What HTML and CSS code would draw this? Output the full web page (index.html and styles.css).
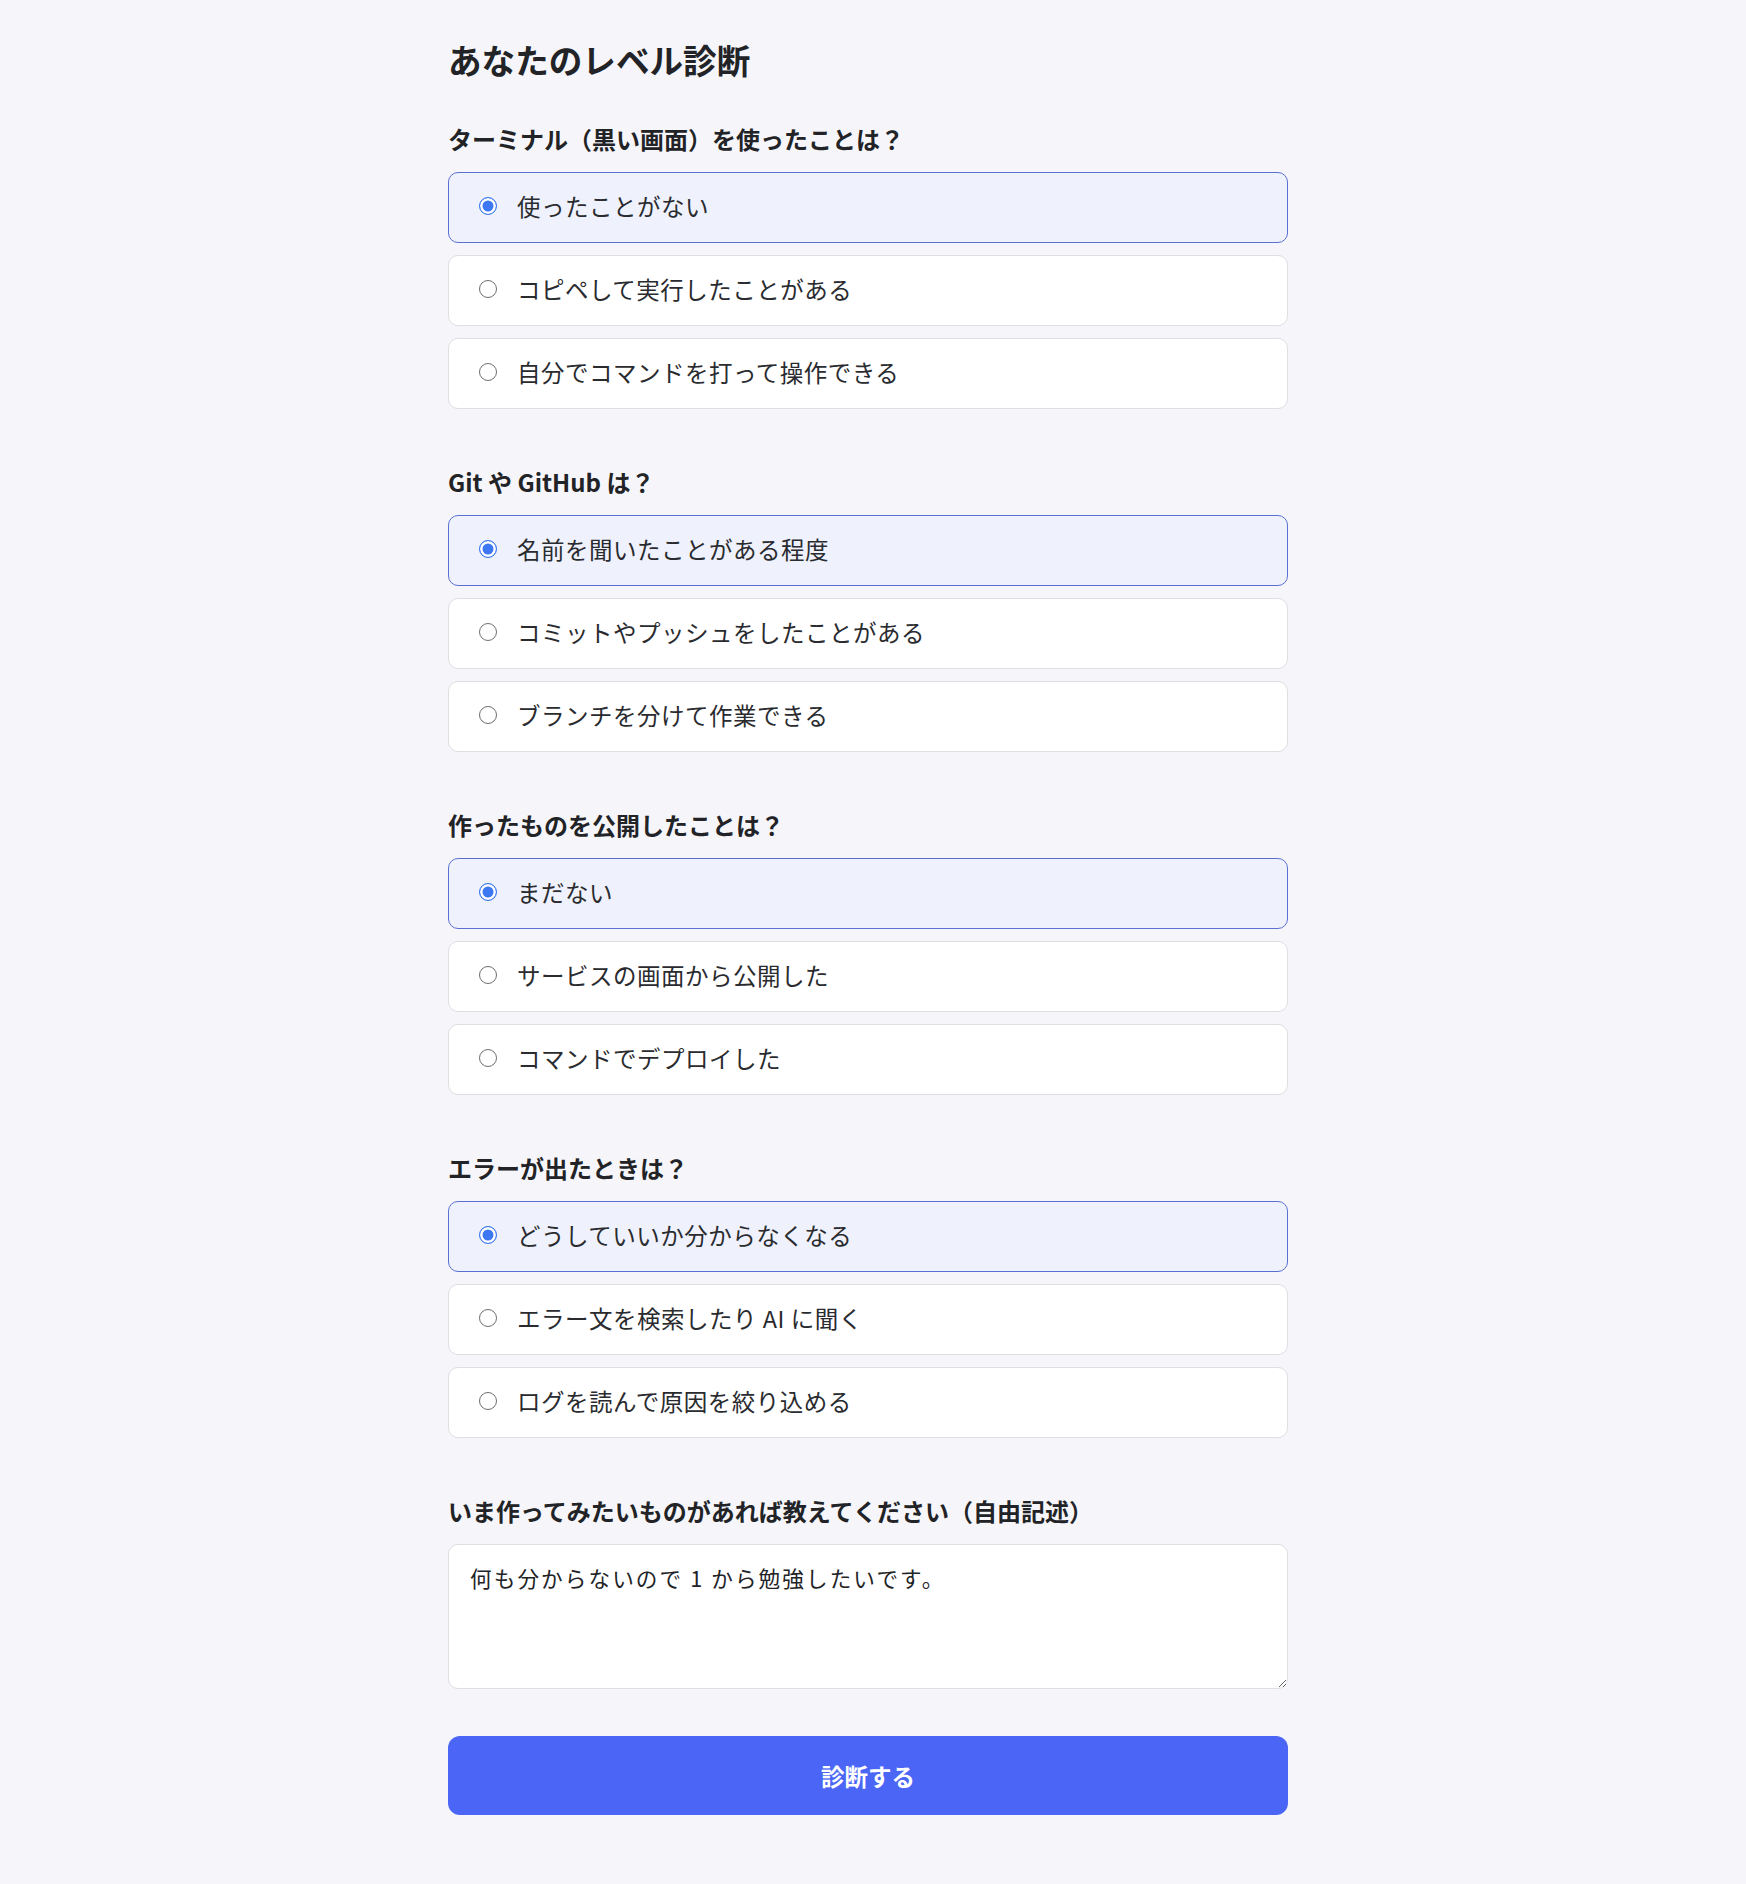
FILE: index.html
```html
<!DOCTYPE html>
<html lang="ja">
<head>
<meta charset="utf-8">
<title>あなたのレベル診断</title>
<link rel="stylesheet" href="styles.css">
</head>
<body>
<main class="page">
  <h1 class="title">あなたのレベル診断</h1>

  <section class="question">
    <h2 class="q-label">ターミナル（黒い画面）を使ったことは？</h2>
    <div class="options">
      <label class="option selected"><input type="radio" name="q1" checked><span>使ったことがない</span></label>
      <label class="option"><input type="radio" name="q1"><span>コピペして実行したことがある</span></label>
      <label class="option"><input type="radio" name="q1"><span>自分でコマンドを打って操作できる</span></label>
    </div>
  </section>

  <section class="question">
    <h2 class="q-label">Git や GitHub は？</h2>
    <div class="options">
      <label class="option selected"><input type="radio" name="q2" checked><span>名前を聞いたことがある程度</span></label>
      <label class="option"><input type="radio" name="q2"><span>コミットやプッシュをしたことがある</span></label>
      <label class="option"><input type="radio" name="q2"><span>ブランチを分けて作業できる</span></label>
    </div>
  </section>

  <section class="question">
    <h2 class="q-label">作ったものを公開したことは？</h2>
    <div class="options">
      <label class="option selected"><input type="radio" name="q3" checked><span>まだない</span></label>
      <label class="option"><input type="radio" name="q3"><span>サービスの画面から公開した</span></label>
      <label class="option"><input type="radio" name="q3"><span>コマンドでデプロイした</span></label>
    </div>
  </section>

  <section class="question">
    <h2 class="q-label">エラーが出たときは？</h2>
    <div class="options">
      <label class="option selected"><input type="radio" name="q4" checked><span>どうしていいか分からなくなる</span></label>
      <label class="option"><input type="radio" name="q4"><span>エラー文を検索したり AI に聞く</span></label>
      <label class="option"><input type="radio" name="q4"><span>ログを読んで原因を絞り込める</span></label>
    </div>
  </section>

  <section class="question last">
    <h2 class="q-label">いま作ってみたいものがあれば教えてください（自由記述）</h2>
    <textarea class="free">何も分からないので 1 から勉強したいです。</textarea>
  </section>

  <button class="submit" type="button">診断する</button>
</main>
</body>
</html>
```

FILE: styles.css
```css
* {
  box-sizing: border-box;
}

html, body {
  margin: 0;
  padding: 0;
  background: #f6f6fa;
}

body {
  padding-right: 10px;
  font-family: "Noto Sans CJK JP", "Noto Sans", sans-serif;
  color: #222326;
}

.page {
  width: 840px;
  margin: 0 auto;
  padding: 40px 0 70px;
}

.title {
  margin: 0 0 41px;
  font-size: 33.6px;
  line-height: 40px;
  font-weight: 700;
  color: #222326;
}

.question {
  margin-bottom: 55px;
}

.question.last {
  margin-bottom: 47px;
}

.q-label {
  margin: 0 0 15px;
  font-size: 24px;
  line-height: 36px;
  font-weight: 700;
  color: #222326;
}

.options {
  display: flex;
  flex-direction: column;
  gap: 12px;
}

.option {
  display: flex;
  align-items: center;
  gap: 20px;
  height: 71px;
  padding: 0 30px 3px 30px;
  background: #ffffff;
  border: 1px solid #dedee3;
  border-radius: 10px;
  font-size: 23.5px;
  letter-spacing: 0.5px;
  color: #2a2b2f;
}

.option.selected {
  background: #eff2fd;
  border-color: #5a6fd2;
}

.option input {
  appearance: none;
  -webkit-appearance: none;
  margin: 0;
  width: 18px;
  height: 18px;
  flex: none;
  border: 1.4px solid #6e6e72;
  border-radius: 50%;
  background: #ffffff;
}

.option input:checked {
  border: 1.5px solid #3d78f2;
  background: #3d78f2;
  box-shadow: inset 0 0 0 2.5px #ffffff;
}

.free {
  display: block;
  width: 100%;
  height: 145px;
  margin: 0;
  padding: 17px 21px;
  background: #ffffff;
  border: 1px solid #dedee3;
  border-radius: 10px;
  font-family: "Noto Sans CJK JP", "Noto Sans", sans-serif;
  font-size: 21.6px;
  letter-spacing: 2.1px;
  line-height: 32px;
  color: #222326;
  resize: vertical;
}

.submit {
  display: block;
  width: 100%;
  height: 79px;
  margin: 0;
  padding: 0;
  border: none;
  border-radius: 12px;
  background: #4b66f6;
  color: #ffffff;
  font-family: "Noto Sans CJK JP", "Noto Sans", sans-serif;
  font-size: 23.5px;
  font-weight: 700;
}
```
